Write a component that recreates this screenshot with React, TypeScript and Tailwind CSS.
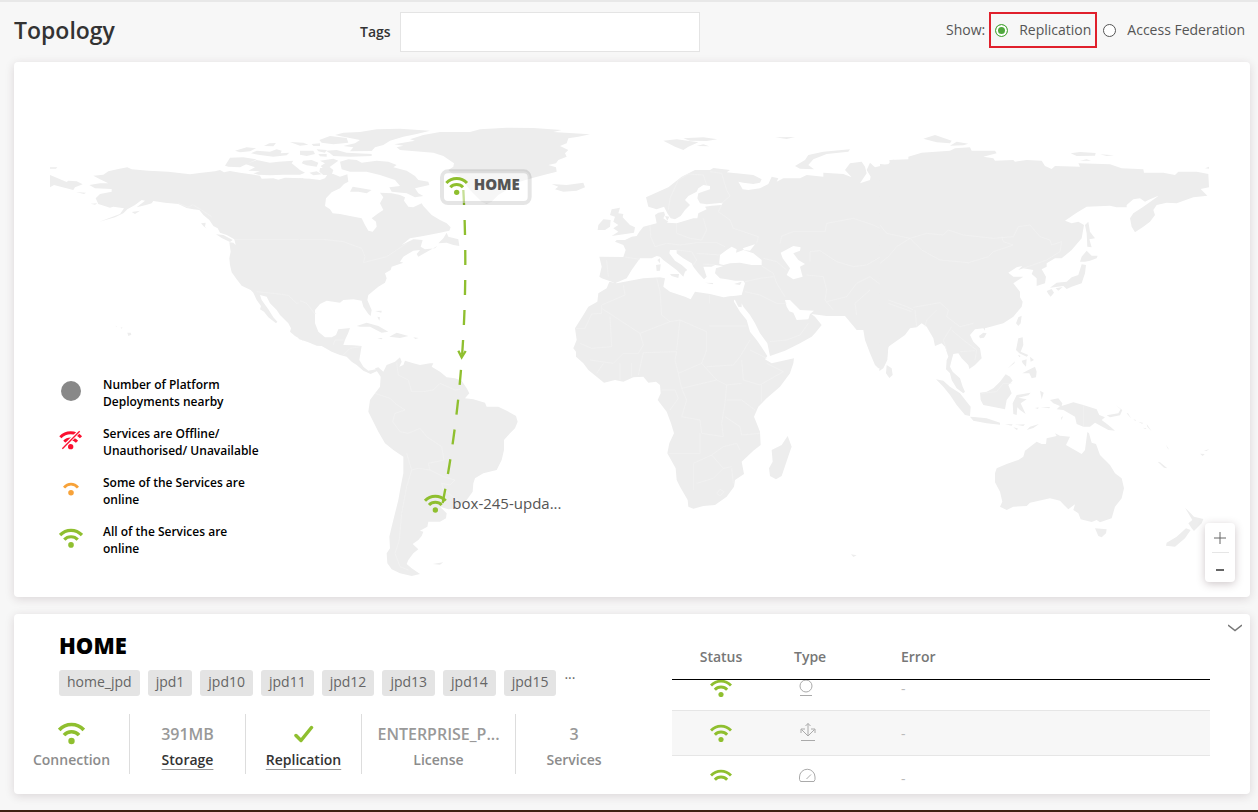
import { useLayoutEffect, useRef, useState } from 'react';
import clsx from 'clsx';

type RegionShape = {
  name: string;
  x: number;
  y: number;
  land: string;
  water?: string;
  borders?: string;
};

type ServiceStat = {
  label: string;
  value: React.ReactNode;
  linked?: boolean;
  wide?: boolean;
};

const TAGS = ['home_jpd', 'jpd1', 'jpd10', 'jpd11', 'jpd12', 'jpd13', 'jpd14', 'jpd15'];

// Each region is drawn in its own local coordinates and moved into place on the map.
const REGIONS: RegionShape[] = [
  {
    name: 'north-america-west',
    x: 78,
    y: 144,
    land: `M160 197L190 194 205 184 235 177 262 172 275 178 325 182 385 185 450 193 485 188 525 184 540 180 552 187 570 183 600 188 660 197 665 206 700 205 715 209 735 203 790 205 790 692 765 678 750 665 753 655 745 640 720 615 710 600 690 580 680 560 660 555 665 570 685 598 700 622 712 635 708 640 685 622 672 605 660 598 663 588 650 570 640 548 632 540 605 527 590 508 575 487 570 465 568 445 572 425 568 397 580 398 587 405 583 388 560 375 540 368 533 355 520 348 508 330 490 315 478 300 460 298 440 294 415 282 375 278 340 273 335 280 318 285 290 292 315 272 305 270 285 285 262 298 250 310 225 322 178 335 240 312 252 295 220 290 210 293 175 282 167 265 180 252 215 245 215 237 165 235 148 225 180 220 205 220 180 208Z
      M30 172L52 172 48 176 30 176Z
      M30 195L80 216 85 212 110 214 128 223 105 232 100 240 62 230 42 225 30 232Z
      M108 246L138 248 132 252Z M152 281L172 280 165 284Z M275 306L300 302 285 312Z
      M483 340L497 338 495 350 500 356 490 348Z M528 373L550 375 578 390 570 396 545 384Z
      M555 167L570 143 610 142 650 148 625 160 600 172 565 170Z
      M618 163L650 150 690 158 715 155 760 152 755 160 780 180 795 188 780 194 730 194 690 196 655 194 640 190 660 184 625 182 645 172Z
      M585 122L620 112 648 115 630 124 600 127Z
      M633 130L650 122 690 125 710 118 725 122 722 130 748 128 740 136 700 140 660 135Z
      M672 108L688 100 708 99 700 109Z M750 96L790 98 805 104 780 107Z
      M262 668L272 668 274 674 265 678Z M242 652L248 653 244 656Z M227 647L231 649 228 650Z`,
    borders:
      'M415 280L445 292 458 284 485 300 515 320M583 388H790M650 545L725 553 745 556 770 580 795 575 828 612',
  },
  {
    name: 'north-america-east',
    x: 858,
    y: 144,
    land: `M-4 205L30 206 60 210 75 205 85 190 100 192 120 200 142 193 145 215 132 222 120 235 95 247 78 265 75 288 90 298 98 310 120 312 150 318 185 325 195 345 205 362 218 365 230 350 228 335 215 325 235 310 250 300 240 280 250 262 240 248 275 250 300 255 315 262 312 272 325 290 340 292 365 280 370 288 395 315 420 330 440 340 452 352 448 362 420 368 370 378 330 385 305 405 340 388 368 390 362 410 375 418 405 415 412 408 355 440 350 432 360 420 340 422 310 440 300 455 310 458 275 470 272 480 255 490 260 505 255 518 235 530 205 555 202 570 215 600 212 618 205 612 190 590 185 572 160 568 130 570 120 578 80 572 60 582 45 600 45 640 55 665 75 682 95 682 108 675 115 658 150 654 145 668 135 690 130 705 160 706 185 708 182 725 178 750 190 770 205 782 235 776 248 785 230 784 212 792 190 782 170 765 155 755 140 740 120 735 95 725 65 708 50 707 25 697 -4 687Z
      M283 103L345 92 330 88 370 75 420 66 510 66 540 58 620 53 700 54 785 60 760 66 820 70 870 73 835 80 805 85 800 100 780 108 805 120 795 130 800 140 775 150 768 160 745 165 768 172 770 185 740 193 700 203 660 215 620 240 595 255 575 275 560 282 545 275 530 260 510 240 480 200 455 190 445 180 460 170 462 160 440 145 430 138 400 128 300 120 290 112 310 107Z
      M105 75L130 68 180 66 230 58 300 56 390 62 350 72 310 80 270 92 250 105 225 112 215 123 150 124 160 112 130 108 165 100 180 90 130 80Z
      M58 90L90 78 140 84 145 98 100 103 65 98Z M78 122L110 120 140 128 215 132 215 138 150 140 100 138 90 130Z
      M35 102L60 100 60 108 40 108Z M50 118L80 120 75 128 55 124Z M0 122L40 122 45 132 20 138 0 134Z M55 132L80 132 80 140 60 139Z
      M60 152L100 146 115 152 90 170 72 178 62 168 75 160Z M10 152L35 150 55 158 50 170 20 166 5 160Z
      M60 175L85 168 100 180 95 195 70 195 58 185Z M28 188L50 184 65 193 40 196Z
      M120 155L145 148 170 150 185 158 230 152 265 155 290 165 280 172 320 182 345 198 355 210 385 215 388 225 345 235 355 250 370 258 345 262 320 250 275 245 268 232 300 228 285 210 240 195 200 185 150 185 125 178Z
      M150 245L158 230 185 235 215 240 200 250 175 245Z
      M415 400L430 385 440 368 445 380 475 388 478 408 460 405 440 398Z
      M170 648L200 638 235 648 265 665 245 668 210 650 180 650Z M268 680L290 668 325 678 300 684Z
      M232 684L248 684 244 688Z M340 682L356 684 346 687Z M225 603L245 602 244 608Z M232 620L240 622 238 632Z
      M755 222L800 225 850 218 855 232 830 242 790 245 765 238 775 230Z`,
    borders:
      'M0 388H70L130 395 185 415 195 440 190 458 260 440 290 420 320 400M0 572L20 580 45 612M100 705L105 690 130 690M130 735L150 715 182 710',
  },
  {
    name: 'south-america',
    x: 978,
    y: 834,
    land: `M105 85L115 82 130 95 140 75 165 65 180 52 185 65 178 80 190 75 195 62 220 70 240 75 270 70 280 70 275 80 300 95 320 112 345 115 365 122 380 145 388 160 375 175 400 178 435 188 440 200 475 200 500 212 528 228 533 245 525 265 510 280 492 300 492 330 485 360 470 390 430 400 405 415 400 430 398 455 380 480 350 505 325 508 300 500 320 520 318 535 300 545 265 545 262 560 240 572 250 575 245 588 235 600 218 612 235 628 220 640 205 660 200 672 215 685 240 702 215 708 180 700 155 688 142 670 140 640 150 625 148 590 155 560 165 520 175 480 182 440 190 400 190 350 160 330 135 310 115 275 100 245 85 215 90 180 105 160 120 140 122 110Z
      M278 672L310 667 300 674Z`,
    borders:
      'M170 68L175 105 205 120 215 155 250 155 280 150 300 130 345 150 360 148M105 160L150 175 165 190 195 210 165 220 158 245 180 275 205 280 240 265 260 290 305 320 312 360 265 370 270 390 235 385 215 390 200 340M215 390L200 440 185 520 178 600 165 640 180 680 205 690M270 390L310 410 345 420 330 435 305 430 310 450 360 485',
  },
  {
    name: 'europe',
    x: 1638,
    y: 144,
    land: `M118 440L190 441 197 420 190 405 165 395 170 390 195 390 215 380 230 378 238 365 250 350 270 345 290 340 285 315 295 308 312 305 315 315 310 325 325 335 320 338 350 340 375 332 400 325 412 325 415 310 440 298 435 290 455 287 485 285 488 278 440 283 420 280 412 265 415 250 450 238 450 228 430 225 415 235 410 245 385 258 375 270 390 285 375 300 362 318 345 328 332 325 322 310 312 290 290 298 265 290 258 262 325 232 365 200 405 180 450 180 460 174 510 180 500 187 580 195 605 208 600 218 580 222 550 218 535 215 548 238 565 240 600 235 625 222 635 200 655 205 650 215 670 205 720 205 740 195 790 200 790 188 850 192 875 202 855 180 870 160 905 155 915 170 920 190 900 220 930 210 932 200 920 180 930 158 945 172 985 162 1000 148 1000 697 985 710 980 750 970 772 955 775 945 765 930 730 915 690 910 660 890 660 855 618 800 618 755 612 745 605 765 620 785 645 765 670 755 680 720 700 675 722 630 738 622 700 600 670 585 640 570 615 550 590 545 580 545 592 535 590 525 570 490 562 545 555 555 520 550 512 525 512 500 508 480 505 465 490 468 475 490 468 465 465 455 470 430 470 440 500 432 508 415 490 400 470 395 460 370 445 350 430 350 420 330 420 328 430 345 452 365 465 382 480 375 485 370 500 350 480 330 465 310 450 300 440 290 438 275 445 240 445 215 480 200 505 165 520 155 515 125 505 118 500 125 470Z
      M155 298L180 293 175 310 190 312 188 322 210 345 225 352 222 368 155 378 175 365 160 355 175 345 160 335 165 320 150 315Z
      M115 345L130 328 152 330 150 350 135 360 113 360Z M315 318L328 320 322 332Z M292 450L300 445 300 460Z M288 465L302 463 300 482 290 483Z
      M330 492L357 492 355 504 335 498Z M435 518L460 519 458 523Z M522 522L545 515 540 525Z
      M310 92L350 88 415 97 385 110 370 120 345 110Z M370 85L430 82 472 88 440 93 390 92Z M410 108L430 103 448 109Z M645 82L705 81 680 87Z
      M705 168L735 150 745 135 790 125 870 118 865 125 800 132 760 148 745 165 762 178 720 176Z`,
    water: `M478 455L480 435 500 420 515 410 530 418 528 428 550 420 580 430 605 450 605 465 575 465 540 458 510 460 490 465 478 462Z
      M548 415L585 403 570 422 552 420Z
      M662 428L700 408 722 412 720 422 700 430 715 450 735 462 720 470 728 500 700 508 680 495 690 475 668 445Z
      M675 570L690 570 720 600 762 602 750 612 745 628 710 630 700 608 688 604 680 590Z`,
    borders:
      'M325 300L330 265 355 210 385 192 430 195 440 225M450 185L485 190 500 240 510 258 485 280M485 285L475 305 510 330 520 355 595 380 590 400M350 340L350 370 390 385 425 390 440 360 430 325M195 441L240 448M140 450L145 500M270 345L272 380 285 410 320 400 360 405 410 398 470 398 495 410M350 420L395 425 410 450 400 465M410 430L480 435M465 465L430 462M610 445L650 455 680 480M605 468L640 490 650 520 675 560M555 515L600 505 640 500M555 545L600 555 650 580 680 580M630 695L680 690 720 675 745 640M660 400L665 378 700 365 795 365 800 340 880 325 940 345 970 360 1000 368M750 455L750 425 780 422 830 455 880 470 920 465 980 430 1000 400M740 495L790 500 800 540 795 570 820 600M800 575L860 560 890 520 930 500 970 530 975 570 1000 590M890 615L885 580 930 540',
  },
  {
    name: 'africa',
    x: 1638,
    y: 774,
    land: `M148 -115L170 -110 210 -118 250 -125 300 -128 315 -125 310 -100 330 -85 375 -70 392 -62 405 -85 450 -78 490 -68 522 -72 522 -55 540 -25 560 0 570 35 590 60 605 82 622 108 615 118 635 130 702 115 700 130 690 160 660 200 620 235 595 260 582 290 590 310 600 335 602 375 580 392 545 425 552 462 525 480 522 500 500 530 465 555 430 558 400 566 385 560 383 540 360 500 350 480 347 445 322 400 328 370 342 340 333 310 320 275 293 240 302 220 300 195 288 185 265 188 250 170 220 172 190 185 165 180 132 188 85 150 70 130 48 110 48 95 40 85 50 60 45 25 70 -15 85 -40 112 -55 115 -80 140 -95Z
      M683 348L695 380 688 400 665 468 648 478 630 468 627 445 638 425 635 390 665 375Z
      M873 703L890 706 880 711Z`,
    borders:
      'M190 -105L195 -75 125 -45 125 -20 95 -18 75 25 48 25M125 -35L240 40 330 5 305 -15 300 -85 290 -125M150 -10L155 80 95 85 60 70M240 40L250 75 235 100 190 100 160 130 90 120M330 5L360 0 440 35 440 90 425 130 355 160 345 120 350 95 250 98 235 165M360 0L350 90M448 -75V-50M448 18H560M440 140L520 135 540 110 570 60M570 90L620 115M620 130L670 155M545 120L550 180 600 195 670 155M425 130L470 180 500 195 545 190M355 160L365 205 470 180M305 210L345 210 355 235 330 270M365 205L380 240 365 290 420 300 425 340 490 350 485 310 495 250 500 195M605 195V245M500 240H545L585 270M495 290L540 320 545 345 600 340M420 340V400H325M400 510V430L455 405 490 380 530 370 540 390M455 405L490 445 515 440M410 490L460 475 490 445M515 445L520 490M470 520L480 508 492 515 480 528ZM180 180V130M215 170V130M110 160L130 130',
  },
  {
    name: 'asia',
    x: 2598,
    y: 144,
    land: `M0 162L30 165 28 150 85 148 85 140 125 128 210 122 225 115 270 112 275 122 345 122 350 130 310 140 340 145 345 152 400 150 405 155 440 150 485 152 495 168 515 177 525 168 600 170 595 160 690 163 725 175 790 178 792 188 850 188 885 195 895 185 950 185 985 192 987 232 962 237 982 257 940 262 890 280 860 278 830 285 820 300 825 315 810 335 790 350 765 367 755 350 750 325 760 310 790 290 830 262 835 257 805 270 795 275 780 265 760 268 740 285 740 292 710 292 690 287 620 290 590 308 555 332 575 340 595 335 612 345 605 385 575 420 545 445 525 445 500 460 500 470 485 478 498 500 495 520 470 528 470 505 455 492 460 480 430 475 415 480 427 468 410 472 385 488 400 500 430 500 400 520 420 545 420 562 428 575 425 590 400 620 370 640 315 655 315 662 310 655 285 658 270 675 280 695 300 715 305 745 285 765 268 777 265 765 245 745 235 730 220 732 215 750 210 770 218 785 240 805 248 830 255 845 250 850 230 835 215 810 210 790 198 778 200 750 205 740 195 710 185 700 165 708 160 685 140 650 125 640 110 652 90 655 75 675 25 710 22 750 10 775 -2 783Z
      M615 345L625 335 630 365 645 385 628 388 635 412 622 410 620 370Z M600 455L605 440 620 422 635 437 653 437 650 445 630 452 615 455Z
      M605 463L618 465 615 490 605 520 575 530 560 537 550 528 510 533 530 518 560 515 575 502 595 495Z
      M500 543L515 537 522 548 512 560 505 552Z M527 535L548 531 535 542Z M408 640L415 622 425 617 422 640 415 648Z M297 678L310 668 320 670 312 683 300 685Z
      M130 86L165 75 215 92 210 100 170 97Z M210 107L230 95 265 101 250 106Z M572 130L600 126 647 129 645 137 590 138Z
      M660 133L702 136 680 138Z M600 152L620 148 633 152Z M975 175L987 170 987 176Z`,
    borders:
      'M0 345L20 370 90 385 140 370 190 375 205 360 250 375 340 385 400 380 415 350 450 345 480 380 510 390 515 405 545 395 540 425 500 450 430 475M90 385L125 420 180 450 265 458 325 440 340 425 400 405 370 395 365 380M0 460L25 440 50 410 90 385M25 570L80 590 100 600M25 580L95 605M100 592L180 578 205 600 200 620 240 650 280 640M105 600L110 650M135 650L140 630 170 600M215 650L190 690 200 720M215 660L250 690 290 720 285 750M240 725L285 722',
  },
  {
    name: 'oceania',
    x: 2538,
    y: 774,
    land: `M468 90L475 55 488 52 490 75 482 95 505 105 500 110 478 100Z M485 122L500 118 498 140 488 130Z M510 110L522 120 512 125Z M474 104L482 108 478 112Z
      M487 160L505 150 525 140 530 155 528 172 515 175 508 160Z M442 146L465 124 463 130Z M80 135L95 145 98 165 88 174 78 160Z
      M360 218L380 215 400 205 420 185 437 163 450 170 458 182 445 195 455 220 440 240 435 268 405 262 370 255 362 240Z
      M228 178L250 182 270 200 300 220 320 245 332 260 330 288 315 285 290 255 270 225 250 200Z
      M330 290L350 292 380 295 420 308 420 314 380 310 340 302Z
      M470 225L512 218 505 226 475 233 500 238 482 250 497 282 480 270 472 262 470 285 460 282 458 250Z
      M570 240L595 235 607 250 605 258 640 247 670 255 710 268 718 285 735 292 725 300 745 315 765 332 745 330 705 308 690 320 670 320 650 312 645 290 610 270 590 268 600 258 580 250Z
      M740 286L775 280 782 268 765 254 787 270 780 286 750 292Z
      M800 280L804 280 814 296ZM820 298L828 300 826 303ZM835 305L850 309 846 311ZM860 312L875 334 862 320ZM848 323L860 325 856 327Z
      M435 313L458 313 455 317ZM465 314L495 313 490 318ZM500 330L510 320 537 312 520 324ZM460 322L475 326 470 330Z
      M525 264L536 262 534 267ZM542 262L570 261 568 265ZM540 212L551 218 545 238ZM603 293L609 288 605 300Z
      M405 460L410 445 440 432 475 420 490 410 495 392 530 365 545 372 558 372 560 355 590 348 585 340 600 347 630 350 618 375 665 402 675 390 682 336 687 340 695 368 708 372 720 405 750 435 765 460 785 475 792 505 785 535 765 560 755 595 720 607 710 600 695 606 662 598 655 580 640 570 645 553 625 568 612 555 600 542 570 535 510 548 500 558 460 560 440 570 420 560 427 545 420 515 405 487Z
      M705 625L740 628 738 640 725 652 715 648Z M975 563L992 580 1002 590 1030 597 1025 610 1002 633 995 625 985 610 997 600Z
      M978 625L992 630 975 655 945 680 918 677 920 668 950 650Z
      M893 425L900 427 922 445 912 443ZM918 374L928 390 922 384ZM1020 401L1034 402 1028 408ZM1032 392L1048 387 1040 393Z`,
    borders: 'M670 255V320M365 220L410 215 430 190 455 190',
  },
];

function SignalShape({ color }: { color: string }) {
  return (
    <>
      <path d="M3 20C20 2 48 2 65 20" fill="none" stroke={color} strokeWidth="9" />
      <path d="M15 33C25 22 43 22 53 33" fill="none" stroke={color} strokeWidth="9" />
      <circle cx="34" cy="48" r="8" fill={color} />
    </>
  );
}

function SignalIcon({ className }: { className?: string }) {
  return (
    <svg viewBox="0 0 68 58" className={clsx('inline-block', className)} aria-hidden="true">
      <SignalShape color="#8fbf2f" />
    </svg>
  );
}

function OfflineIcon() {
  return (
    <svg viewBox="0 0 72 62" className="w-6" aria-hidden="true">
      <g transform="translate(1 2)">
        <SignalShape color="#fb1030" />
      </g>
      <path d="M8 57L62 3" stroke="#fff" strokeWidth="10" />
      <path d="M10 56L62 4" stroke="#fb1030" strokeWidth="4" />
    </svg>
  );
}

function PartialIcon() {
  return (
    <svg viewBox="0 0 46 40" className="w-4" aria-hidden="true">
      <path d="M3 16C14 3 32 3 43 16" fill="none" stroke="#f7a239" strokeWidth="8" />
      <circle cx="23" cy="31" r="8" fill="#f7a239" />
    </svg>
  );
}

const LEGEND = [
  {
    label: 'Number of Platform Deployments nearby',
    icon: <span className="size-5 rounded-full bg-[#888]" />,
  },
  { label: 'Services are Offline/ Unauthorised/ Unavailable', icon: <OfflineIcon /> },
  { label: 'Some of the Services are online', icon: <PartialIcon /> },
  { label: 'All of the Services are online', icon: <SignalIcon className="w-6" /> },
];

const STATS: ServiceStat[] = [
  { label: 'Connection', value: <SignalIcon className="w-[27px]" /> },
  { label: 'Storage', value: '391MB', linked: true },
  {
    label: 'Replication',
    value: (
      <svg viewBox="0 0 40 36" className="w-5" aria-hidden="true">
        <path
          d="M4 21L14 31 35 5"
          fill="none"
          stroke="#8fbf2f"
          strokeWidth="7"
          strokeLinecap="round"
          strokeLinejoin="round"
        />
      </svg>
    ),
    linked: true,
  },
  { label: 'License', value: 'ENTERPRISE_P...', wide: true },
  { label: 'Services', value: '3' },
];

const REPLICATION_TYPES = [
  <svg key="mirror" viewBox="0 0 36 40" className="ml-1 w-[18px]" aria-hidden="true">
    <ellipse cx="16" cy="18" rx="12" ry="12" />
    <path d="M4 37H28" />
  </svg>,
  <svg key="push" viewBox="0 0 36 40" className="ml-1 w-[18px]" aria-hidden="true">
    <path d="M20 28V3M15 8L20 3 25 8M20 28L7 15M6 22V14H14M20 28L33 15M26 14H34V22M6 37H34" />
  </svg>,
  <svg key="gauge" viewBox="0 0 36 40" className="ml-1 w-[18px]" aria-hidden="true">
    <path d="M3 25V20A15 15 0 0 1 34 20V25L32 29H5ZM17 24L26 15" />
  </svg>,
];

function WorldMap() {
  return (
    <svg viewBox="0 0 3708 1605" className="block w-full" role="img" aria-label="Topology map">
      {REGIONS.map((region) => (
        <g key={region.name} transform={`translate(${region.x} ${region.y})`}>
          <path d={region.land} fill="#ededed" />
          {region.water ? <path d={region.water} fill="#fff" /> : null}
          {region.borders ? (
            <path d={region.borders} fill="none" stroke="#f3f3f3" strokeWidth="2" />
          ) : null}
        </g>
      ))}

      <path
        d="M1348 384Q1374 870 1286 1323"
        fill="none"
        stroke="#8fbf2f"
        strokeWidth="7"
        strokeDasharray="45 45"
      />
      <path d="M1333 866L1343 886 1355 867" fill="none" stroke="#8fbf2f" strokeWidth="7" />

      <rect
        x="1284"
        y="328"
        width="263"
        height="95"
        rx="18"
        fill="#fff"
        fillOpacity="0.5"
        stroke="#000"
        strokeOpacity="0.1"
        strokeWidth="12"
      />
      <g transform="translate(1294 343)">
        <SignalShape color="#8fbf2f" />
      </g>
      <text x="1379" y="385" fontSize="45" fontWeight="800" fill="#555">
        HOME
      </text>

      <g transform="translate(1230 1296)">
        <SignalShape color="#8fbf2f" />
      </g>
      <text x="1315" y="1341" fontSize="45" fill="#555">
        box-245-upda...
      </text>
    </svg>
  );
}

function MapCard() {
  return (
    <section className="relative rounded-sm bg-white shadow-[0_2px_10px_rgba(60,30,40,0.15)]">
      <WorldMap />

      <ul className="absolute bottom-10 left-[45px] flex flex-col gap-[15px]">
        {LEGEND.map((item) => (
          <li key={item.label} className="flex items-center gap-5">
            <span className="flex w-6 justify-center pb-1">{item.icon}</span>
            <span className="w-40 text-xs leading-[17px] font-semibold text-black">{item.label}</span>
          </li>
        ))}
      </ul>

      <div className="absolute right-[15px] bottom-[15px] flex w-[30px] flex-col items-center rounded-sm bg-white text-[#666] shadow-[0_2px_8px_rgba(60,30,40,0.25)]">
        <button type="button" aria-label="Zoom in" className="flex h-[29px] w-full items-center justify-center">
          <svg viewBox="0 0 14 14" className="w-3.5" aria-hidden="true">
            <path d="M7 1V13M1 7H13" stroke="currentColor" />
          </svg>
        </button>
        <span className="h-px w-[17px] bg-[#e6e6e6]" />
        <button type="button" aria-label="Zoom out" className="flex h-[29px] w-full items-center justify-center pt-1">
          <span className="h-0.5 w-2 bg-[#666]" />
        </button>
      </div>
    </section>
  );
}

function ReplicationTable() {
  const scrollRef = useRef<HTMLDivElement>(null);

  useLayoutEffect(() => {
    if (scrollRef.current) {
      scrollRef.current.scrollTop = 14;
    }
  }, []);

  return (
    <div ref={scrollRef} className="mt-5 mr-10 h-[148px] flex-1 overflow-y-auto [scrollbar-width:none]">
      <table className="w-full table-fixed border-separate border-spacing-0 text-left text-sm">
        <thead className="sticky top-0 z-10 bg-white text-[#777]">
          <tr className="h-[46px]">
            <th className="w-[98px] border-b border-black text-center font-semibold">Status</th>
            <th className="w-[131px] border-b border-black pl-6 font-semibold">Type</th>
            <th className="border-b border-black font-semibold">Error</th>
          </tr>
        </thead>
        <tbody className="text-[#bbb]">
          {REPLICATION_TYPES.map((icon, index) => (
            <tr key={icon.key} className={clsx('h-[45px]', index % 2 === 1 && 'bg-[#f7f7f7]')}>
              <td className="border-b border-[#e6e6e6] pb-0.5 text-center">
                <SignalIcon className="w-[22px]" />
              </td>
              <td className="border-b border-[#e6e6e6] fill-none stroke-[#aaa] stroke-2 pb-0.5 pl-6">{icon}</td>
              <td className="border-b border-[#e6e6e6] pt-0.5">-</td>
            </tr>
          ))}
        </tbody>
      </table>
    </div>
  );
}

function DetailsCard() {
  return (
    <section className="relative mt-[17px] flex rounded-sm bg-white shadow-[0_2px_10px_rgba(60,30,40,0.15)]">
      <div className="w-[658px] shrink-0 pt-4 pb-5">
        <h2 className="pl-[45px] text-[22px] leading-[30px] font-extrabold text-black">HOME</h2>

        <ul className="mt-2.5 flex gap-2 pl-[45px] text-sm text-[#666]">
          {TAGS.map((tag) => (
            <li key={tag} className="rounded-[3px] bg-[#e4e4e4] px-2 pb-0.5 leading-6">
              {tag}
            </li>
          ))}
          <li className="leading-2">...</li>
        </ul>

        <dl className="mt-[18px] flex">
          {STATS.map((stat) => (
            <div
              key={stat.label}
              className={clsx(
                'flex h-[60px] flex-col-reverse items-center justify-end border-r border-[#ddd] last:border-r-0',
                stat.wide ? 'w-[154px]' : 'w-[116px]',
              )}
            >
              <dt
                className={clsx(
                  'text-sm leading-5 font-semibold',
                  stat.linked ? 'text-[#333]' : 'text-[#8c8c8c]',
                )}
              >
                {stat.linked ? (
                  <a href="#" className="underline decoration-[#999] decoration-1 underline-offset-4">
                    {stat.label}
                  </a>
                ) : (
                  stat.label
                )}
              </dt>
              <dd className="flex h-9 items-center pt-1 text-base font-semibold text-[#999]">{stat.value}</dd>
            </div>
          ))}
        </dl>
      </div>

      <ReplicationTable />

      <button type="button" aria-label="Collapse details" className="absolute top-2 right-2 text-[#777]">
        <svg viewBox="0 0 28 24" className="w-3.5" fill="none" aria-hidden="true">
          <path d="M0 6L14 17 28 6" stroke="currentColor" strokeWidth="3" />
        </svg>
      </button>
    </section>
  );
}

export default function App() {
  const [show, setShow] = useState('replication');
  const radioClass =
    'size-[13px] appearance-none rounded-full border border-[#555] bg-white checked:border-[#4fa83d] checked:bg-[#4fa83d] checked:shadow-[inset_0_0_0_2px_#fff]';

  return (
    <div className="border-t-2 border-b-2 border-t-[#e8e8e8] border-b-[#3d1f12] bg-[#f7f7f7] pr-2 pb-4 pl-3.5 font-['Open_Sans',sans-serif]">
      <header className="flex h-[60px] items-center pr-[5px]">
        <h1 className="mb-1 w-[346px] text-[23px] font-semibold text-[#333]">Topology</h1>
        <label htmlFor="tags" className="w-10 text-sm font-semibold text-[#333]">
          Tags
        </label>
        <input id="tags" type="text" className="h-10 w-[300px] border border-[#e4e4e4] bg-white px-3 text-sm" />

        <fieldset className="mb-1 ml-auto flex items-center text-sm text-[#555]">
          <span className="mr-1">Show:</span>
          <label className="mr-1.5 flex h-9 items-center gap-[11px] border-2 border-[#e0202c] px-1">
            <input
              type="radio"
              name="show"
              className={radioClass}
              checked={show === 'replication'}
              onChange={() => setShow('replication')}
            />
            Replication
          </label>
          <label className="flex items-center gap-[11px]">
            <input
              type="radio"
              name="show"
              className={radioClass}
              checked={show === 'federation'}
              onChange={() => setShow('federation')}
            />
            Access Federation
          </label>
        </fieldset>
      </header>

      <main>
        <MapCard />
        <DetailsCard />
      </main>
    </div>
  );
}
